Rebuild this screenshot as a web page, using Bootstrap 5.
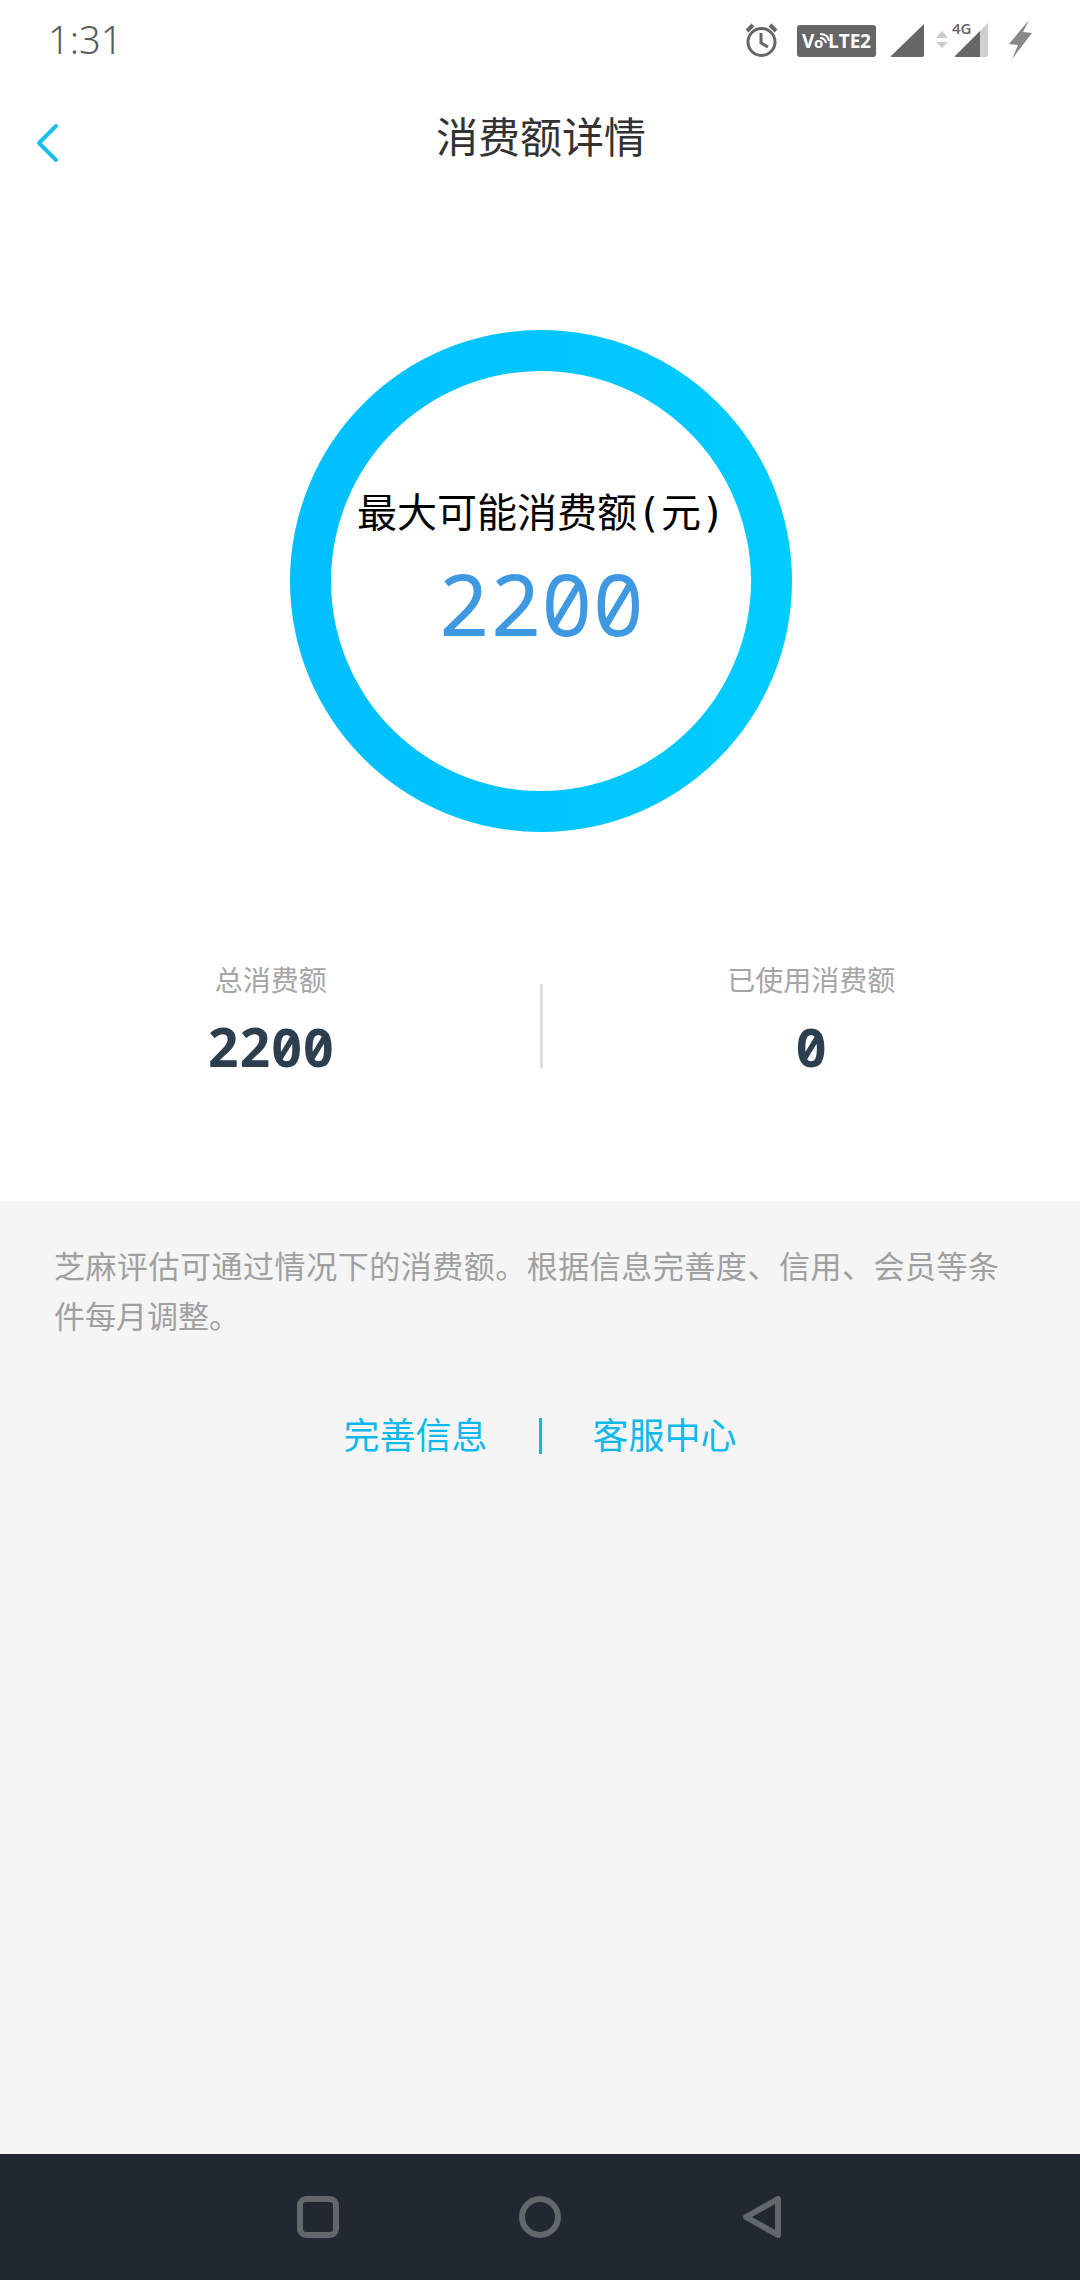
<!DOCTYPE html>
<html lang="zh-CN">
<head>
<meta charset="utf-8">
<meta name="viewport" content="width=device-width, initial-scale=1">
<title>消费额详情</title>
<link href="https://cdn.jsdelivr.net/npm/bootstrap@5.3.0/dist/css/bootstrap.min.css" rel="stylesheet">
<style>
  body { font-family: "Noto Sans", "Noto Sans CJK SC", sans-serif; background: #f5f5f5; color: #333; }
  .status-bar { height: 81px; padding: 0 46px 0 48px; color: #5c5c5c; background: #fefefe; }
  .clock { font-size: 38px; font-weight: 300; line-height: 76px; height: 80px; }
  .page-head { height: 119px; padding-left: 2px; }
  .page-head h1 { font-size: 42px; font-weight: 400; line-height: 60px; padding-top: 26px; }
  .back-link { left: 30px; top: 38px; line-height: 1; }
  .summary { padding-left: 2px; }
  .ring { width: 502px; height: 502px; padding: 41px; margin-top: 130px; background: linear-gradient(90deg, #00bfff, #00ccff); }
  .ring-inner { padding-top: 112px; }
  .ring-label { font-family: "DejaVu Sans Mono", "Noto Sans CJK SC", monospace; font-size: 40px; line-height: 60px; color: #000; }
  .figure-num { font-family: "Noto Sans Mono", "Noto Sans", sans-serif; font-feature-settings: "zero"; }
  .ring-value { font-size: 86px; line-height: 120px; color: #3e98e2; }
  .stats { padding: 128px 0 115px; }
  .stat-name { font-size: 28px; line-height: 40px; color: #a5a5a5; }
  .stat-value { font-size: 53px; font-weight: 700; line-height: 78px; margin-top: 8px; color: #2d3e50; }
  .stat-rule { width: 3px; height: 84px; margin-top: 24px; background: #dfdfdf; }
  .note { font-size: 31px; line-height: 50px; padding: 40px 81px 0 54px; color: #a0a0a0; text-align: justify; }
  .links { font-size: 36px; line-height: 54px; margin-top: 68px; gap: 51px; color: #10b9eb; }
  .link-rule { width: 3px; height: 36px; background: #10b9eb; }
  .system-nav { height: 126px; gap: 180px; background: #222831; }
</style>
<script src="https://cdn.jsdelivr.net/npm/bootstrap@5.3.0/dist/js/bootstrap.bundle.min.js"></script>
</head>
<body class="d-flex flex-column min-vh-100">
<header class="bg-white">
  <div class="status-bar d-flex justify-content-between align-items-center">
    <time class="clock">1:31</time>
    <svg width="290" height="62" viewBox="744 10 290 62" role="img" aria-label="闹钟 VoLTE2 4G 充电中">
      <g fill="none" stroke="#666" stroke-width="3">
        <circle cx="761.500" cy="42" r="13.500"/>
        <path d="M761 33v10l7 4" stroke-linejoin="round"/>
        <path d="M747 31l6-6M776 31l-6-6" stroke-width="4"/>
      </g>
      <rect x="797" y="25" width="79" height="32" rx="3" fill="#666"/>
      <g fill="#fff" font-family="Open Sans, sans-serif" font-weight="700">
        <text x="802" y="48" font-size="19">V</text>
        <text x="814" y="48" font-size="15">o</text>
        <text x="828" y="48" font-size="19">LTE</text>
        <text x="860" y="48" font-size="19">2</text>
      </g>
      <g fill="none" stroke="#fff" stroke-width="2"><path d="M820 38q5 0 6 5M820 34q8 0 9 7"/></g>
      <path d="M891 56L924 24V55q0 2-2 2H891z" fill="#666"/>
      <path d="M936 38l6-7 6 7zM936 42h12l-6 6z" fill="#ccc"/>
      <path d="M980 31l8-8V55q0 2-2 2H980z" fill="#d0d0d0"/>
      <path d="M955 56L980 31V57H955z" fill="#666"/>
      <text x="952" y="34" font-size="15" font-weight="600" fill="#666" font-family="Open Sans, sans-serif">4G</text>
      <path d="M1029 20L1009 44l9 1-6 14 20-26-9-1z" fill="#888"/>
    </svg>
  </div>
  <div class="page-head position-relative text-center">
    <a class="back-link position-absolute" href="#" aria-label="返回">
      <svg width="32" height="48" viewBox="0 0 32 48"><path d="M26 7L9 24L26 41" fill="none" stroke="#1abdea" stroke-width="4" stroke-linecap="round" stroke-linejoin="round"/></svg>
    </a>
    <h1 class="m-0">消费额详情</h1>
  </div>
</header>
<main class="flex-grow-1">
  <section class="summary bg-white overflow-hidden">
    <div class="ring rounded-circle mx-auto">
      <div class="ring-inner bg-white rounded-circle w-100 h-100 text-center">
        <div class="ring-label text-nowrap">最大可能消费额(元)</div>
        <div class="ring-value figure-num">2200</div>
      </div>
    </div>
    <div class="stats d-flex text-center">
      <div class="flex-fill w-50">
        <div class="stat-name">总消费额</div>
        <div class="stat-value figure-num">2200</div>
      </div>
      <div class="stat-rule flex-shrink-0"></div>
      <div class="flex-fill w-50">
        <div class="stat-name">已使用消费额</div>
        <div class="stat-value figure-num">0</div>
      </div>
    </div>
  </section>
  <p class="note m-0">芝麻评估可通过情况下的消费额。根据信息完善度、信用、会员等条件每月调整。</p>
  <nav class="links d-flex justify-content-center align-items-center">
    <a class="text-reset text-decoration-none" href="#">完善信息</a>
    <span class="link-rule"></span>
    <a class="text-reset text-decoration-none" href="#">客服中心</a>
  </nav>
</main>
<footer class="system-nav d-flex justify-content-center align-items-center">
  <button class="btn p-0 border-0 d-flex" aria-label="最近任务"><svg width="42" height="42" fill="none" stroke="#63666b" stroke-width="6"><rect x="3" y="3" width="36" height="36" rx="6"/></svg></button>
  <button class="btn p-0 border-0 d-flex" aria-label="主页"><svg width="42" height="42" fill="none" stroke="#63666b" stroke-width="6"><circle cx="21" cy="21" r="18"/></svg></button>
  <button class="btn p-0 border-0 d-flex" aria-label="返回"><svg width="42" height="42" fill="none" stroke="#63666b" stroke-width="6" stroke-linejoin="round"><path d="M37 3V39L5 21z"/></svg></button>
</footer>
</body>
</html>
